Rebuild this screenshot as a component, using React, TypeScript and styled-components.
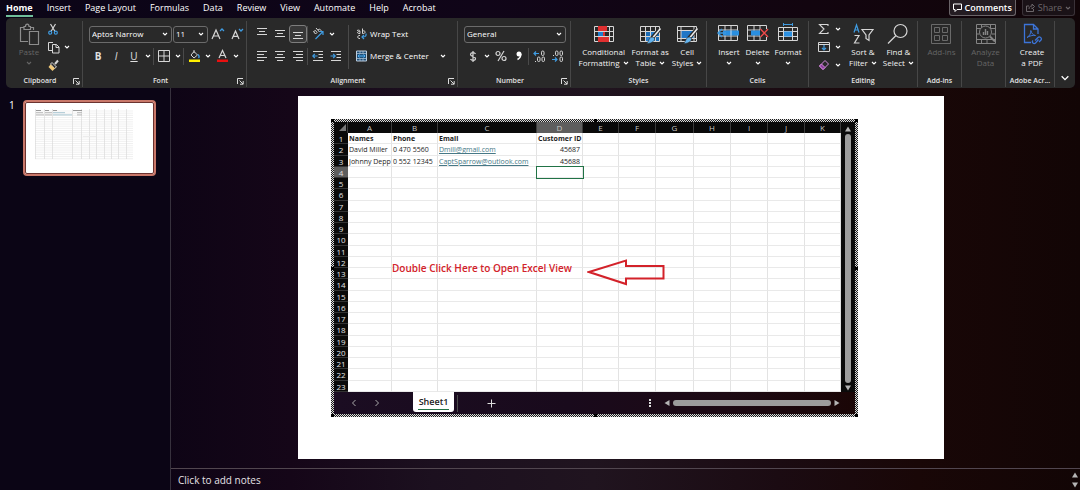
import React from 'react';
import styled, { createGlobalStyle, css } from 'styled-components';

const Global = createGlobalStyle`
  * { box-sizing: border-box; }
  body { margin: 0; background: #0b0514; color: #fff; font-family: "Open Sans", "Noto Sans", sans-serif; }
  button, select { font: inherit; color: inherit; margin: 0; padding: 0; border: 0; background: none; }
  svg { display: block; flex: none; fill: none; }
`;

const Page = styled.div`
  display: flex;
  flex-direction: column;
  min-height: 100vh;
  background: linear-gradient(90deg, #090514 0%, #0d0415 14%, #150618 27%, #1c101f 40%, #20141f 55%, #1b0b12 72%, #190707 85%, #120505 100%);
`;

/* ---------- header tabs ---------- */
const Header = styled.header`
  display: flex;
  align-items: flex-start;
  justify-content: space-between;
  height: 18px;
  padding: 0 5px 0 6px;
  background: linear-gradient(90deg, #0b0517, #100518 45%, #12050f 75%, #110508);
`;
const Tabs = styled.nav`
  display: flex;
  gap: 14px;
  font-size: 9px;
`;
const Tab = styled.button<{ $active?: boolean }>`
  height: 17px;
  line-height: 15px;
  border-bottom: 2px solid ${p => (p.$active ? '#6fbf9a' : 'transparent')};
  font-weight: ${p => (p.$active ? 700 : 400)};
  white-space: nowrap;
`;
const HeaderActions = styled.div`
  display: flex;
  gap: 6px;
`;
const HeaderButton = styled.button<{ $dim?: boolean }>`
  display: flex;
  align-items: center;
  gap: 3px;
  height: 16px;
  padding: 0 3px;
  border: 1px solid ${p => (p.$dim ? '#3a3238' : '#6a6468')};
  border-top: 0;
  border-radius: 0 0 3px 3px;
  background: ${p => (p.$dim ? '#1a1217' : '#241c22')};
  color: ${p => (p.$dim ? '#6c666a' : '#fff')};
  font-size: 9px;
  font-weight: ${p => (p.$dim ? 400 : 600)};
  line-height: 14px;
`;

/* ---------- ribbon ---------- */
const RibbonBack = styled.div`
  background: linear-gradient(90deg, #0b0517, #100518 45%, #12050f 75%, #110508);
`;
const Ribbon = styled.section`
  display: grid;
  grid-template-columns: 77fr 164fr 211fr 113fr 136fr 102fr 109fr 44fr 44fr 49fr 20fr;
  height: 70px;
  margin: 0 5px 0 6px;
  border-radius: 5px;
  background: #292929;
`;
const GroupBox = styled.div`
  display: flex;
  flex-direction: column;
  min-width: 0;
  margin: 3px 0 1px;
  &:not(:last-child) { border-right: 1px solid #474747; }
`;
const GroupBody = styled.div<{ $center?: boolean; $gap?: number; $pad?: number }>`
  display: flex;
  flex: 1;
  padding: 2px 0 0 ${p => p.$pad ?? 6}px;
  gap: ${p => p.$gap ?? 0}px;
  ${p => p.$center && css`justify-content: center; padding-left: 4px;`}
`;
const GroupFoot = styled.div<{ $launch?: boolean }>`
  display: grid;
  grid-template-columns: ${p => (p.$launch ? '4px 1fr 12px' : '0 1fr 0')};
  align-items: center;
  justify-items: center;
  height: 12px;
  font-size: 7px;
  line-height: 10px;
  font-weight: 600;
  color: #e4e4e4;
  white-space: nowrap;
  span { grid-column: 2; }
`;
const Launcher = styled.button`
  display: grid;
  place-items: center;
  width: 10px;
  height: 10px;
`;
const Stack = styled.div<{ $top?: number }>`
  display: flex;
  flex-direction: column;
  margin-top: ${p => p.$top ?? 0}px;
  gap: 4px;
`;
const TightStack = styled(Stack)`
  gap: 0;
  margin-top: -3px;
`;
const Row = styled.div<{ $gap?: number }>`
  display: flex;
  align-items: center;
  height: 18px;
  gap: ${p => p.$gap ?? 0}px;
`;
const Tool = styled.button<{ $on?: boolean }>`
  display: grid;
  place-items: center;
  flex: none;
  width: 18px;
  height: 18px;
  font-size: 10px;
  line-height: 14px;
  color: #e0e0e0;
  ${p => p.$on && css`border: 1px solid #7d7d7d; border-radius: 3px; background: #383838;`}
`;
const Drop = styled(Tool)`
  width: 10px;
`;
const Rule = styled.i<{ $tall?: boolean }>`
  width: 1px;
  margin-right: 1px;
  height: ${p => (p.$tall ? 44 : 17)}px;
  background: #4a4a4a;
`;
const WideTool = styled.button`
  display: flex;
  align-items: center;
  gap: 3px;
  height: 18px;
  font-size: 8px;
  line-height: 14px;
  white-space: nowrap;
`;
const SelectWrap = styled.span<{ $w: number }>`
  display: grid;
  align-items: center;
  width: ${p => p.$w}px;
  height: 17px;
  border: 1px solid #6b6b6b;
  border-radius: 3px;
  select, svg { grid-area: 1 / 1; }
  svg { justify-self: end; margin-right: 3px; pointer-events: none; }
  select { appearance: none; width: 100%; padding-left: 2px; font-size: 8px; line-height: 14px; outline: 0; }
  option { color: #000; }
`;
const BigTool = styled.button<{ $dim?: boolean }>`
  display: flex;
  flex-direction: column;
  align-items: center;
  flex: none;
  font-size: 8px;
  line-height: 11px;
  color: ${p => (p.$dim ? '#656565' : '#f2f2f2')};
  white-space: nowrap;
  > svg { margin-bottom: 1px; }
`;
const Line = styled.span`
  display: flex;
  align-items: center;
  gap: 3px;
  height: 11px;
`;
const Collapse = styled.button`
  display: grid;
  place-items: center;
  height: 14px;
  margin-top: auto;
  margin-bottom: 2px;
`;

/* ---------- workspace ---------- */
const Workspace = styled.div`
  display: grid;
  grid-template-columns: 171px 1fr;
  flex: 1;
`;
const Sidebar = styled.aside`
  display: flex;
  align-items: flex-start;
  gap: 8px;
  padding: 12px 0 0 9px;
  border-right: 1px solid #37313d;
  background: #0b0515;
  font-size: 10px;
  line-height: 10px;
`;
const Thumb = styled.button`
  width: 133px;
  height: 76px;
  border: 2px solid #c9786a;
  border-radius: 4px;
  outline: 1px solid #6b3330;
  outline-offset: -3px;
  background: #fff;
  svg { width: 100%; height: 100%; }
`;
const Main = styled.main`
  display: flex;
  flex-direction: column;
  min-width: 0;
`;
const Slide = styled.section`
  margin: 8px 136px 9px 127px;
  padding: 23px 86px 0 33px;
  aspect-ratio: 646 / 363;
  background: #fff;
`;
const Notes = styled.footer`
  display: flex;
  align-items: center;
  justify-content: space-between;
  flex: 1;
  min-height: 22px;
  padding: 0 2px 0 7px;
  border-top: 1px solid #51464f;
  font-size: 10px;
  color: #e6e2e6;
`;
const NotesScroll = styled.div`
  display: grid;
  gap: 4px;
`;

/* ---------- embedded sheet ---------- */
const Embed = styled.div`
  position: relative;
  padding: 3px;
  background: repeating-conic-gradient(#1c1c1c 0 25%, #dcdcdc 0 50%) 0 0 / 2px 2px;
`;
const Handle = styled.i<{ $x: string; $y: string }>`
  position: absolute;
  left: ${p => p.$x};
  top: ${p => p.$y};
  width: 3px;
  height: 3px;
  background: #000;
`;
const SheetArea = styled.div`
  display: grid;
  grid-template-columns: 1fr 14px;
  background: #0a0a0a;
`;
const Sheet = styled.table`
  width: 100%;
  height: 270px;
  table-layout: fixed;
  border-collapse: separate;
  border-spacing: 0;
  font-size: 7px;
  line-height: 9px;
  color: #1c1c1c;
  background: #fff;
  th, td { padding: 0; height: 11px; }
`;
const ColHead = styled.th<{ $on?: boolean }>`
  background: ${p => (p.$on ? '#5e5e5e' : '#0a0a0a')};
  border-right: 1px solid #3c3c3c;
  color: #c4c4c4;
  font-size: 8px;
  font-weight: 400;
  text-align: center;
  svg { margin-left: auto; }
`;
const RowHead = styled(ColHead)`
  border-right: 0;
  border-bottom: 1px solid #333;
  color: #e2e2e2;
  && { padding-top: 1px; }
`;
const Cell = styled.td<{ $bold?: boolean; $right?: boolean; $sel?: boolean; $spill?: boolean }>`
  border-right: 1px solid #e3e3e3;
  border-bottom: 1px solid #e9e9e9;
  overflow: ${p => (p.$spill ? 'visible' : 'hidden')};
  white-space: nowrap;
  text-align: ${p => (p.$right ? 'right' : 'left')};
  font-weight: ${p => (p.$bold ? 700 : 400)};
  && { padding: ${p => (p.$right ? '1px 2px 0 0' : '1px 0 0 1px')}; }
  ${p => p.$sel && css`outline: 1px solid #217346;`}
  a { color: #467886; }
`;
const VScroll = styled.div`
  display: flex;
  flex-direction: column;
  align-items: center;
  gap: 2px;
  padding: 4px 0 1px;
`;
const Thumbbar = styled.i<{ $w?: number }>`
  flex: ${p => (p.$w ? 'none' : 1)};
  width: ${p => p.$w ?? 6}px;
  min-height: 6px;
  border-radius: 3px;
  background: #9c9c9c;
`;
const SheetBar = styled.div`
  display: grid;
  grid-template-columns: 79px 41px 1fr auto;
  height: 22px;
  background: linear-gradient(90deg, #1b0d22, #190a1c 45%, #1d0a14 75%, #1a0606);
`;
const SheetNav = styled.div`
  display: flex;
  align-items: center;
  gap: 5px;
  padding-left: 11px;
`;
const SheetTab = styled.button`
  height: 20px;
  padding: 0 5px;
  border-radius: 0 0 3px 3px;
  background: #fff;
  color: #222;
  font-size: 9px;
  font-weight: 600;
  line-height: 15px;
  span { display: block; border-bottom: 1px solid #217346; }
`;
const AddArea = styled.div`
  display: flex;
  align-items: center;
  gap: 23px;
  padding-left: 3px;
`;
const HScroll = styled.div`
  display: flex;
  align-items: center;
  gap: 3px;
  padding-right: 15px;
`;
const Callout = styled.div`
  position: absolute;
  left: 61px;
  top: 140px;
  display: flex;
  align-items: center;
  gap: 15px;
  color: #d3222a;
  font-size: 10px;
  font-weight: 600;
  line-height: 16px;
  white-space: nowrap;
  span { margin-top: -9px; }
`;

/* ---------- icons ---------- */
const W = '#d6d6d6';
const B = '#3f9be0';
const Chevron = ({ c = '#fff', s = 6 }: { c?: string; s?: number }) => (
  <svg width={s} height={s} viewBox="0 0 6 6"><path d="M1 2l2 2 2-2" stroke={c} strokeWidth={s > 6 ? 0.8 : 1.1} /></svg>
);
const LaunchIcon = () => (
  <svg width="7" height="7" viewBox="0 0 7 7"><path d="M.5 6V.5H6M2.500 2.500l3.500 3.500M6.200 3v3.200H3" stroke="#ddd" /></svg>
);
const Triangle = ({ d, c = '#b5b5b5' }: { d: string; c?: string }) => (
  <svg width="6" height="6" viewBox="0 0 6 6"><path d={d} fill={c} /></svg>
);
const UP = 'M3 .5 6 5.5H0z', DOWN = 'M3 5.5 6 .5H0z', LEFT = 'M.5 3 5.5 0v6z', RIGHT = 'M5.5 3 .5 0v6z';

const PasteIcon = () => (
  <svg width="22" height="22" viewBox="0 0 22 22" stroke="#8d8d8d" strokeWidth="1.200">
    <path d="M10 18.500H2.500v-14H6M12 4.500h3.500V7M6 6.500v-3h1.500C7.500.3 11 .3 11 3.500h1.500v3z" />
    <path d="M11.500 8.500h9v13h-9z" />
  </svg>
);
const CutIcon = () => (
  <svg width="12" height="12" viewBox="0 0 12 12"><path d="M3.500 1 8 8.500M8.500 1 4 8.500" stroke={W} strokeWidth="1.200" /><circle cx="3.200" cy="9.700" r="1.500" stroke={B} strokeWidth="1.200" /><circle cx="8.800" cy="9.700" r="1.500" stroke={B} strokeWidth="1.200" /></svg>
);
const CopyIcon = () => (
  <svg width="13" height="13" viewBox="0 0 13 13" stroke={W}><path d="M5 9.500H1.500v-8H6M5.500 3.500h4l2.500 2.500v6H5.500zM9 3.500v3h3" /></svg>
);
const BrushIcon = () => (
  <svg width="13" height="13" viewBox="0 0 13 13"><path d="m8 5 3-3.500" stroke={W} strokeWidth="2" /><path d="M5 3.500 9.500 8l-2 1.500-4-4.500z" stroke={W} /><path d="M3.500 5.500 1.500 8l4 4L8 9.500z" fill="#f0c878" /></svg>
);
const FontSizeIcon = ({ up }: { up?: boolean }) => (
  <svg width="14" height="14" viewBox="0 0 14 14"><path d={up ? 'M1 12 5 3l4 9M2.500 9h5' : 'M2 12l3.500-8L9 12M3.300 9.300h4.400'} stroke={W} strokeWidth="1.200" /><path d={up ? 'm9 4 2-2 2 2' : 'm9 2 2 2 2-2'} stroke={B} strokeWidth="1.300" /></svg>
);
const BorderIcon = () => (
  <svg width="12" height="12" viewBox="0 0 12 12" stroke={W}><path d="M.5.5h11v11H.5zM6 .5v11M.5 6h11" /></svg>
);
const FillColor = () => (
  <svg width="13" height="14" viewBox="0 0 13 14"><path d="M6 2.500 9.500 6 6 9 3 6zM6 4V1" stroke={W} /><path d="M10 5.500c1.500 1.500 1 3 .5 3.500" stroke={B} strokeWidth="1.300" /><path d="M1 10.500h11v2.500H1z" fill="#ffef00" /></svg>
);
const FontColor = () => (
  <svg width="13" height="14" viewBox="0 0 13 14"><path d="m3 9 3.500-7.500L10 9M4.200 6.500h4.600" stroke={W} strokeWidth="1.200" /><path d="M1 10.500h11v2.500H1z" fill="#e81010" /></svg>
);
const Bars = ({ rows }: { rows: [number, number, number][] }) => (
  <svg width="12" height="12" viewBox="0 0 12 12" stroke={W}>{rows.map(([y, a, b]) => <path key={y} d={`M${a} ${y}.5H${b}`} />)}</svg>
);
const Orientation = () => (
  <svg width="14" height="14" viewBox="0 0 14 14"><path d="M2.500 4.500 4.500 7 6 5.500l-1.500-2zM5 1l3.500 4L10 3.500 8.500 2 7 3" stroke={W} /><path d="m4.500 12 7-7M8.500 4.500H12V8" stroke={B} strokeWidth="1.200" /></svg>
);
const Indent = ({ out }: { out?: boolean }) => (
  <svg width="12" height="12" viewBox="0 0 12 12"><path d="M1 1.500h10M6.500 4.500H11M6.500 7.500H11M1 10.500h10" stroke={W} /><path d={out ? 'M5.500 6H1M2.800 4l-2 2 2 2' : 'M.5 6H5M3.200 4l2 2-2 2'} stroke={B} strokeWidth="1.200" /></svg>
);
const WrapIcon = () => (
  <svg width="11" height="12" viewBox="0 0 11 12"><path d="M1 2.500c3-1 3 0 3 3-3 .5-3.500-2-.3-2M6.500.5v5c3.500.5 3.500-3.500 0-2.500M4 7.500c-3-.5-3 3.500 0 3" stroke={W} /><path d="M10 5.500c.5 3-1 3.500-4 3.500M8 7 6 9l2 2" stroke={B} strokeWidth="1.200" /></svg>
);
const MergeIcon = () => (
  <svg width="11" height="12" viewBox="0 0 11 12"><path d="M.5 1h10v10H.5z" fill="#1f4f78" stroke="#bcd" /><path d="M.5 3.500h10M.5 8.500h10M4 1v2.500M7 1v2.500M4 8.500V11M7 8.500V11" stroke="#bcd" strokeWidth=".7" /><path d="M2 6h7M3.500 4.500 2 6l1.500 1.500M7.500 4.500 9 6 7.500 7.500" stroke="#4fb0f5" /></svg>
);
const SigmaIcon = () => (
  <svg width="12" height="12" viewBox="0 0 12 12"><path d="M10 3V1.500H1.500L6 6l-4.500 4.500H10V9" stroke={W} strokeWidth="1.100" /></svg>
);
const FillDown = () => (
  <svg width="12" height="12" viewBox="0 0 12 12"><path d="M.5 1.500h11v9H.5zM.5 3.500h11" stroke={W} /><path d="M6 4v5M4 7l2 2 2-2" stroke={B} strokeWidth="1.200" /></svg>
);
const EraserIcon = () => (
  <svg width="12" height="12" viewBox="0 0 12 12"><path d="M7 1.500 10.500 5 5 10.500 1.500 7z" stroke="#d68be0" /><path d="M3.500 5 7 8.500l-2 2L1.500 7z" fill="#8d3d9c" stroke="#d68be0" /></svg>
);
const Decimal = ({ inc }: { inc?: boolean }) => (
  <svg width="13" height="13" viewBox="0 0 13 13">
    <path d={inc ? 'M6 3.500H1M3 1.500l-2 2 2 2' : 'M1 9.500h5M4 7.500l2 2-2 2'} stroke={B} strokeWidth="1.200" />
    {(inc ? [[8.5, 1], [4.5, 7], [9, 7]] : [[4.5, 1], [9, 1], [9, 7]]).map(([x, y]) => <rect key={`${x}-${y}`} x={x} y={y} width="2.500" height="4.500" rx="1.200" stroke={W} />)}
    <path d={inc ? 'M2 11.500h1' : 'M2 5.500h1'} stroke={W} />
  </svg>
);
const cellGrid = 'M1.500 3.500h19v15h-19zM1.500 8.500h19M1.500 13.500h19M6.500 3.500v15M11.500 3.500v15M16.500 3.500v15';
const CondIcon = () => (
  <svg width="22" height="22" viewBox="0 0 22 22"><path d={cellGrid} stroke={W} /><path d="M5 3h9v5H5zM5 14h11v5H5z" fill="#e03030" /><path d="M5 9h5v4H5z" fill="#1f7fd0" /><path d="M10 9h2v4h-2z" fill="#e03030" /></svg>
);
const Brush = () => <><path d="m21 6-8 9" stroke="#292929" strokeWidth="4" /><path d="m21.500 5.500-7.500 9" stroke="#ececec" strokeWidth="1.600" /><path d="M13.500 14c2 .5 2.500 2 1.500 3.500-1.500 2.500-5 3-7.500 3 2.500-1.500 2-6.500 6-6.500z" fill="#63b4ef" stroke="#292929" strokeWidth=".6" /></>;
const FormatTable = () => (
  <svg width="23" height="22" viewBox="0 0 23 22"><path d="M6.500 8h14v10.500h-14z" fill="#1b6cb5" /><path d={cellGrid} stroke={W} /><path d="M12 9h4v4h-4zM12 14h4v4h-4zM7 14h4v4H7z" fill="#2a80d0" /><Brush /></svg>
);
const CellStyles = () => (
  <svg width="23" height="22" viewBox="0 0 23 22"><path d="M5 7.500h13v8.500H5z" fill="#1f76c6" /><path d="M1.500 3.500h19v15h-19zM1.500 7.500h19M5 3.500v15M18 3.500v15M1.500 15.500h19" stroke={W} /><Brush /></svg>
);
const InsertCells = () => (
  <svg width="23" height="22" viewBox="0 0 23 22"><path d="M1.500 2.500h19v15h-19zM1.500 7h19M1.500 13h19M8 2.500v15M14 2.500v15" stroke={W} /><path d="M6 7.500h16v5H6z" fill="#2a8fe0" /><path d="M14 7.500v5" stroke="#cde" /><path d="M9 10H1M5 6l-4 4 4 4" stroke={B} strokeWidth="1.400" /></svg>
);
const DeleteCells = () => (
  <svg width="23" height="22" viewBox="0 0 23 22"><path d="M1.500 2.500h19v15h-19zM1.500 7h19M1.500 13h19M8 2.500v15M14 2.500v15" stroke={W} /><path d="M5 7.500h9v5H5z" fill="#2a8fe0" /><path d="M14 6h9v8h-9z" fill="#292929" /><path d="m14.500 6 7.500 8M22 6l-7.500 8" stroke="#ee4a4a" strokeWidth="1.400" /></svg>
);
const FormatCells = () => (
  <svg width="23" height="22" viewBox="0 0 23 22"><path d="M1.500 4.500h19v13h-19zM1.500 8.500h19M1.500 13.500h19M6.500 4.500v13M15.500 4.500v13" stroke={W} /><path d="M7 8.500h8v5H7z" fill="#2a8fe0" /><path d="M6 1.500h10M6.500 0v3M15.500 0v3" stroke={B} /></svg>
);
const SortIcon = () => (
  <svg width="22" height="22" viewBox="0 0 22 22"><path d="M2 9.500 4.500 2 7 9.500M3 7h3" stroke={B} strokeWidth="1.200" /><path d="M2.500 12.500H7L2.500 20h5" stroke={W} strokeWidth="1.200" /><path d="M10 6.500h11L17 12v5.500l-3-2V12z" stroke={W} strokeWidth="1.200" /></svg>
);
const FindIcon = () => (
  <svg width="22" height="22" viewBox="0 0 22 22" stroke={W} strokeWidth="1.200"><circle cx="13.500" cy="8" r="6.500" /><path d="m9 12.500-8 8" /></svg>
);
const AddinsIcon = () => (
  <svg width="22" height="22" viewBox="0 0 22 22" stroke="#6a6a6a"><path d="M1.500 1.500h19v19h-19zM4.500 4.500h5v5h-5zM12.500 4.500h5v5h-5zM4.500 12.500h5v5h-5zM12.500 12.500h5v5h-5z" /></svg>
);
const AnalyzeIcon = () => (
  <svg width="22" height="22" viewBox="0 0 22 22" stroke="#858585"><path d="M1.500 1.500h19v19h-19zM1.500 5.500h19M1.500 16.500h19M6.500 1.500v4M15.500 1.500v4M1.500 11h3M17 11h3.500M6.500 16.500v4M12 16.500v4" /><circle cx="10.500" cy="9" r="6" fill="#292929" /><path d="m15 13.500 5 5" strokeWidth="2" /><path d="M8.500 12V9M10.500 12V6M12.500 12V8" strokeWidth="1.400" /></svg>
);
const PdfIcon = () => (
  <svg width="22" height="22" viewBox="0 0 22 22" stroke="#3c74d8" strokeWidth="1.300"><path d="M10 19.500H3.500v-18h9L17 6v5M12.500 1.500V6H17" /><path d="M6 14.500c3-1.500 4-5 3.800-7 1 3 2 4.500 4.700 5-3-.5-6 .5-8.500 2z" strokeWidth="1" /><path d="m14 17.500 3-3c1.500-1.500 4.500.5 3 2.500l-2 2M17.500 16.500l-3 3.500c-1.500 1.500-4.500-.5-2.500-2.500" /></svg>
);

const ThumbArt = () => (
  <svg viewBox="0 0 129 72" preserveAspectRatio="none">
    {[10, 19, 27, 47, 56, 64, 71, 79, 86, 93, 101].map(x => <path key={x} d={`M${x + 0.5} 7v50`} stroke="#e6e6e6" />)}
    {Array.from({ length: 23 }, (_, i) => <path key={i} d={`M10 ${9 + i * 2.17}h98`} stroke="#dadada" strokeWidth=".4" />)}
    <path d="M11 8.500h5M20 8.500h4M28 8.500h4M48 8.500h9" stroke="#999" />
    <path d="M11 10.700h7M20 10.700h7M52 10.700h5M11 12.900h8M20 12.900h7M52 12.900h5" stroke="#b8b8b8" />
    <path d="M28 10.700h12M28 12.900h19" stroke="#a8c6d2" />
    <path d="M58 34.500h13" stroke="#ececec" />
  </svg>
);

/* ---------- data ---------- */
const TABS = ['Home', 'Insert', 'Page Layout', 'Formulas', 'Data', 'Review', 'View', 'Automate', 'Help', 'Acrobat'];
const COLS = 'ABCDEFGHIJK'.split('');
const WIDTHS = [14, 44, 46, 99, 46, 36, 37, 38, 37, 37, 37, 36];
const DATA: string[][] = [
  ['Names', 'Phone', 'Email', 'Customer ID'],
  ['David Miller', '0 470 5560', 'Dmill@gmail.com', '45687'],
  ['Johnny Depp', '0 552 12345', 'CaptSparrow@outlook.com', '45688'],
];
const SPOTS = ['0px', 'calc(50% - 1px)', 'calc(100% - 3px)'];

const Group = ({ label, launch, center, gap, pad, children }: { label: string; launch?: boolean; center?: boolean; gap?: number; pad?: number; children: React.ReactNode }) => (
  <GroupBox>
    <GroupBody $center={center} $gap={gap} $pad={pad}>{children}</GroupBody>
    <GroupFoot $launch={launch}><span>{label}</span>{launch && <Launcher aria-label={`${label} settings`}><LaunchIcon /></Launcher>}</GroupFoot>
  </GroupBox>
);
const Big = ({ icon, a, b, dim, drop }: { icon: React.ReactNode; a: string; b?: string; dim?: boolean; drop?: boolean }) => (
  <BigTool $dim={dim}>
    {icon}
    <Line>{a}</Line>
    <Line>{b}{drop && <Chevron c={dim ? '#656565' : '#fff'} />}</Line>
  </BigTool>
);
const More = ({ name }: { name: string }) => <Drop aria-label={`${name} options`}><Chevron /></Drop>;

export default function App() {
  return (
    <Page>
      <Global />
      <Header>
        <Tabs>{TABS.map((t, i) => <Tab key={t} $active={i === 0}>{t}</Tab>)}</Tabs>
        <HeaderActions>
          <HeaderButton>
            <svg width="9" height="9" viewBox="0 0 9 9"><path d="M.5 1h8v5.500H4l-2 2v-2H.5z" stroke="#fff" /></svg>
            Comments
          </HeaderButton>
          <HeaderButton $dim>
            <svg width="9" height="9" viewBox="0 0 9 9"><path d="M3 3H.5v5.500h7V6M3 6c0-2 1-3 3-3V1l2.500 2.500L6 6V4.500" stroke="#6c666a" /></svg>
            Share
            <Chevron c="#6c666a" />
          </HeaderButton>
        </HeaderActions>
      </Header>

      <RibbonBack>
        <Ribbon>
          <Group label="Clipboard" launch gap={4} pad={12}>
            <Stack><Big icon={<PasteIcon />} a="Paste" dim drop /></Stack>
            <TightStack>
              <Row><Tool aria-label="Cut"><CutIcon /></Tool></Row>
              <Row><Tool aria-label="Copy"><CopyIcon /></Tool><More name="Copy" /></Row>
              <Row><Tool aria-label="Format painter"><BrushIcon /></Tool></Row>
            </TightStack>
          </Group>

          <Group label="Font" launch>
            <Stack $top={2}>
              <Row $gap={1}>
                <SelectWrap $w={83}><select aria-label="Font"><option>Aptos Narrow</option></select><Chevron /></SelectWrap>
                <SelectWrap $w={35}><select aria-label="Font size"><option>11</option></select><Chevron /></SelectWrap>
                <Tool aria-label="Grow font"><FontSizeIcon up /></Tool>
                <Tool aria-label="Shrink font"><FontSizeIcon /></Tool>
              </Row>
              <Row>
                <Tool><b>B</b></Tool><Tool><i>I</i></Tool><Tool><u>U</u></Tool><More name="Underline" /><Rule />
                <Tool aria-label="Borders"><BorderIcon /></Tool><More name="Borders" /><Rule />
                <Tool aria-label="Fill color"><FillColor /></Tool><More name="Fill" />
                <Tool aria-label="Font color"><FontColor /></Tool><More name="Font color" />
              </Row>
            </Stack>
          </Group>

          <Group label="Alignment" launch>
            <Stack $top={2}>
              <Row>
                <Tool aria-label="Top align"><Bars rows={[[0, 1, 11], [3, 3, 9], [6, 1, 11]]} /></Tool>
                <Tool aria-label="Middle align"><Bars rows={[[2, 1, 11], [5, 3, 9], [8, 1, 11]]} /></Tool>
                <Tool $on aria-label="Bottom align"><Bars rows={[[4, 1, 11], [7, 3, 9], [10, 1, 11]]} /></Tool>
                <Rule /><Tool aria-label="Orientation"><Orientation /></Tool><More name="Orientation" />
              </Row>
              <Row>
                <Tool aria-label="Align left"><Bars rows={[[1, 1, 11], [4, 1, 8], [7, 1, 11], [10, 1, 8]]} /></Tool>
                <Tool aria-label="Center"><Bars rows={[[1, 1, 11], [4, 3, 9], [7, 1, 11], [10, 3, 9]]} /></Tool>
                <Tool aria-label="Align right"><Bars rows={[[1, 1, 11], [4, 4, 11], [7, 1, 11], [10, 4, 11]]} /></Tool>
                <Rule /><Tool aria-label="Decrease indent"><Indent out /></Tool><Tool aria-label="Increase indent"><Indent /></Tool>
              </Row>
            </Stack>
            <GroupBody $gap={6} $pad={3}>
              <Rule $tall />
              <Stack>
                <WideTool><WrapIcon />Wrap Text</WideTool>
                <Row $gap={9}><WideTool><MergeIcon />Merge &amp; Center</WideTool><More name="Merge" /></Row>
              </Stack>
            </GroupBody>
          </Group>

          <Group label="Number" launch>
            <Stack $top={2}>
              <Row><SelectWrap $w={102}><select aria-label="Number format"><option>General</option></select><Chevron /></SelectWrap></Row>
              <Row>
                <Tool aria-label="Currency"><svg width="8" height="13" viewBox="0 0 8 13" stroke={W} strokeWidth="1.200"><path d="M6.500 4C5.500 2 1.500 2.200 1.500 4.500s5 1.500 5 4-4 2.500-5 .5M4 1v11" /></svg></Tool><More name="Currency" />
                <Tool aria-label="Percent"><svg width="12" height="12" viewBox="0 0 12 12" stroke={W} strokeWidth="1.200"><circle cx="3" cy="3.500" r="2" /><circle cx="9" cy="8.500" r="2" /><path d="m9 1-6 10" /></svg></Tool>
                <Tool aria-label="Comma style"><svg width="8" height="12" viewBox="0 0 8 12"><circle cx="4" cy="4" r="2.500" fill="#fff" /><path d="M5.800 4c0 3-1.300 4.500-3.300 5.500" stroke="#fff" strokeWidth="1.500" /></svg></Tool><Rule />
                <Tool aria-label="Increase decimal"><Decimal inc /></Tool><Tool aria-label="Decrease decimal"><Decimal /></Tool>
              </Row>
            </Stack>
          </Group>

          <Group label="Styles" center gap={3}>
            <Big icon={<CondIcon />} a="Conditional" b="Formatting" drop />
            <Big icon={<FormatTable />} a="Format as" b="Table" drop />
            <Big icon={<CellStyles />} a="Cell" b="Styles" drop />
          </Group>

          <Group label="Cells" center gap={5}>
            <Big icon={<InsertCells />} a="Insert" drop />
            <Big icon={<DeleteCells />} a="Delete" drop />
            <Big icon={<FormatCells />} a="Format" drop />
          </Group>

          <Group label="Editing" gap={6}>
            <TightStack>
              <Row><Tool aria-label="AutoSum"><SigmaIcon /></Tool><More name="AutoSum" /></Row>
              <Row><Tool aria-label="Fill"><FillDown /></Tool><More name="Fill" /></Row>
              <Row><Tool aria-label="Clear"><EraserIcon /></Tool><More name="Clear" /></Row>
            </TightStack>
            <Big icon={<SortIcon />} a="Sort &amp;" b="Filter" drop />
            <Big icon={<FindIcon />} a="Find &amp;" b="Select" drop />
          </Group>

          <Group label="Add-ins" center><Big icon={<AddinsIcon />} a="Add-ins" dim /></Group>
          <Group label="" center><Big icon={<AnalyzeIcon />} a="Analyze" b="Data" dim /></Group>
          <Group label="Adobe Acr..." center><Big icon={<PdfIcon />} a="Create" b="a PDF" /></Group>
          <GroupBox><Collapse aria-label="Collapse ribbon"><Chevron s={10} /></Collapse></GroupBox>
        </Ribbon>
      </RibbonBack>

      <Workspace>
        <Sidebar>
          1
          <Thumb aria-label="Slide 1"><ThumbArt /></Thumb>
        </Sidebar>
        <Main>
          <Slide>
            <Embed>
              <SheetArea>
                <Sheet>
                  <colgroup>{WIDTHS.map((w, i) => <col key={i} width={w} />)}</colgroup>
                  <thead>
                    <tr>
                      <ColHead aria-label="Select all"><svg width="8" height="8" viewBox="0 0 8 8"><path d="M7 0v7H0z" fill="#777" /></svg></ColHead>
                      {COLS.map(c => <ColHead key={c} $on={c === 'D'}>{c}</ColHead>)}
                    </tr>
                  </thead>
                  <tbody>
                    {Array.from({ length: 23 }, (_, r) => (
                      <tr key={r}>
                        <RowHead $on={r === 3}>{r + 1}</RowHead>
                        {COLS.map((c, i) => {
                          const v = DATA[r]?.[i];
                          return (
                            <Cell key={c} $bold={r === 0} $right={i === 3 && r > 0} $sel={r === 3 && i === 3} $spill={r === 0}>
                              {v && i === 2 && r > 0 ? <a href={`mailto:${v}`}>{v}</a> : v}
                            </Cell>
                          );
                        })}
                      </tr>
                    ))}
                  </tbody>
                </Sheet>
                <VScroll><Triangle d={UP} /><Thumbbar /><Triangle d={DOWN} /></VScroll>
              </SheetArea>
              <SheetBar>
                <SheetNav>
                  <Tool aria-label="Previous sheet"><svg width="6" height="8" viewBox="0 0 6 8"><path d="M4.500 1l-3 3 3 3" stroke="#aaa" /></svg></Tool>
                  <Tool aria-label="Next sheet"><svg width="6" height="8" viewBox="0 0 6 8"><path d="m1.500 1 3 3-3 3" stroke="#aaa" /></svg></Tool>
                </SheetNav>
                <SheetTab><span>Sheet1</span></SheetTab>
                <AddArea>
                  <Rule />
                  <Tool aria-label="New sheet"><svg width="9" height="9" viewBox="0 0 9 9"><path d="M4.500.5v8M.5 4.500h8" stroke="#ddd" /></svg></Tool>
                </AddArea>
                <HScroll>
                  <svg width="12" height="8" viewBox="0 0 12 8"><path d="M0 0h2v2H0zM0 3h2v2H0zM0 6h2v2H0z" fill="#ddd" /></svg>
                  <Triangle d={LEFT} /><Thumbbar $w={158} /><Triangle d={RIGHT} />
                </HScroll>
              </SheetBar>
              <Callout>
                <span>Double Click Here to Open Excel View</span>
                <svg width="79" height="27" viewBox="0 0 79 27"><path d="M2 13 39 1.500V7h37.500v12.500H39V25z" stroke="#d3222a" strokeWidth="2" /></svg>
              </Callout>
              {SPOTS.flatMap((x, i) => SPOTS.filter((_, j) => i !== 1 || j !== 1).map(y => <Handle key={x + y} $x={x} $y={y} />))}
            </Embed>
          </Slide>
          <Notes>
            Click to add notes
            <NotesScroll><Triangle d={UP} /><Triangle d={DOWN} /></NotesScroll>
          </Notes>
        </Main>
      </Workspace>
    </Page>
  );
}
